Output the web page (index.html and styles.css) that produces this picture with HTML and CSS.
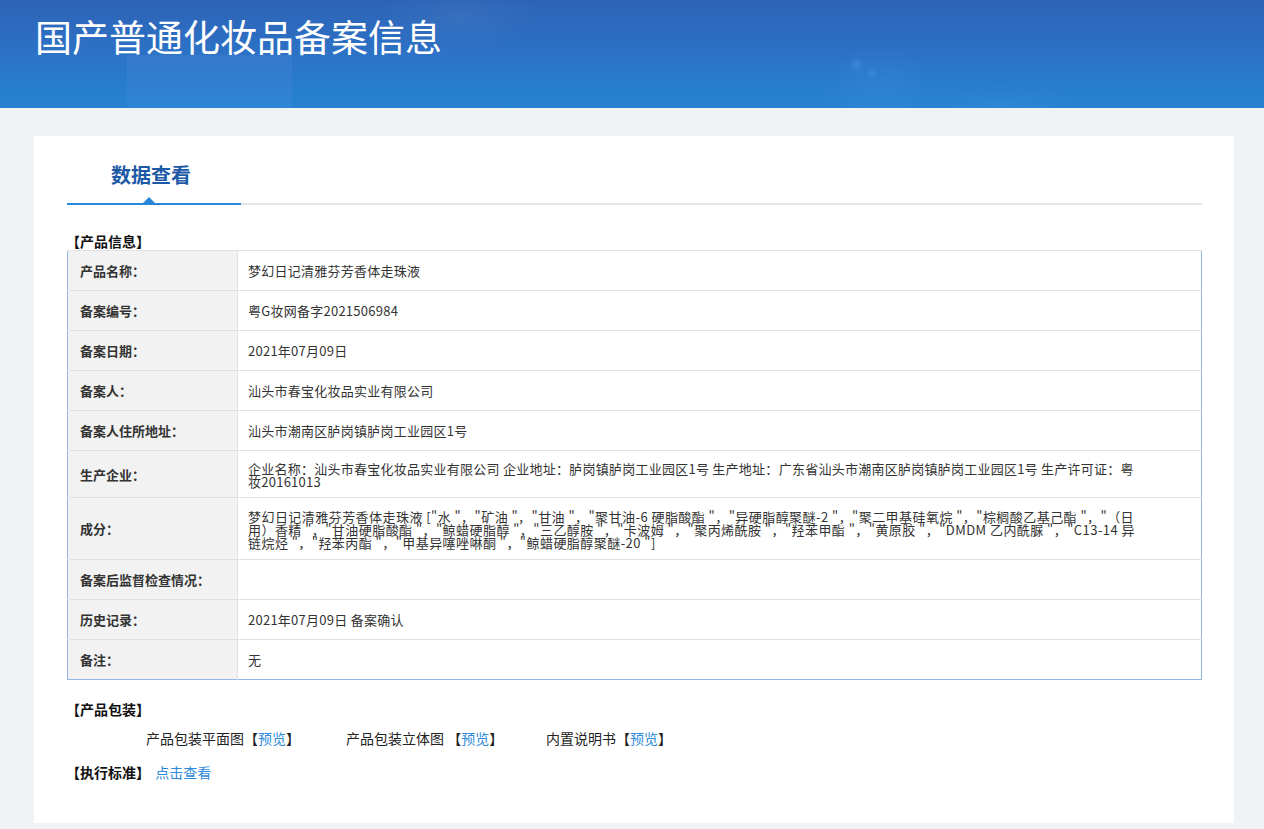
FILE: index.html
```html
<!DOCTYPE html>
<html lang="zh-CN">
<head>
<meta charset="utf-8">
<title>国产普通化妆品备案信息</title>
<link rel="stylesheet" href="styles.css">
</head>
<body>
<header class="banner">
  <h1 class="banner-title">国产普通化妆品备案信息</h1>
</header>
<main class="page">
  <section class="card">
    <div class="tabs">
      <div class="tab tab-active">数据查看</div>
    </div>

    <h2 class="section-title section-info">【产品信息】</h2>
    <table class="info">
      <tr class="row"><th>产品名称<span class="colon">：</span></th><td>梦幻日记清雅芬芳香体走珠液</td></tr>
      <tr class="row"><th>备案编号<span class="colon">：</span></th><td>粤G妆网备字2021506984</td></tr>
      <tr class="row"><th>备案日期<span class="colon">：</span></th><td>2021年07月09日</td></tr>
      <tr class="row"><th>备案人<span class="colon">：</span></th><td>汕头市春宝化妆品实业有限公司</td></tr>
      <tr class="row"><th>备案人住所地址<span class="colon">：</span></th><td>汕头市潮南区胪岗镇胪岗工业园区1号</td></tr>
      <tr class="row row-multi"><th>生产企业<span class="colon">：</span></th><td>企业名称<span class="colon">：</span>汕头市春宝化妆品实业有限公司 企业地址<span class="colon">：</span>胪岗镇胪岗工业园区1号 生产地址<span class="colon">：</span>广东省汕头市潮南区胪岗镇胪岗工业园区1号 生产许可证<span class="colon">：</span>粤妆20161013</td></tr>
      <tr class="row row-multi row-comp"><th>成分<span class="colon">：</span></th><td>梦幻日记清雅芬芳香体走珠液 ["水 "，"矿油 "，"甘油 "，"聚甘油-6 硬脂酸酯 "，"异硬脂醇聚醚-2 "，"聚二甲基硅氧烷 "，"棕榈酸乙基己酯 "，"（日用）香精 "，"甘油硬脂酸酯 "，"鲸蜡硬脂醇 "，"三乙醇胺 "，"卡波姆 "，"聚丙烯酰胺 "，"羟苯甲酯 "，"黄原胶 "，"DMDM 乙内酰脲 "，"C13-14 异链烷烃 "，"羟苯丙酯 "，"甲基异噻唑啉酮 "，"鲸蜡硬脂醇聚醚-20 "]</td></tr>
      <tr class="row"><th>备案后监督检查情况<span class="colon">：</span></th><td></td></tr>
      <tr class="row"><th>历史记录<span class="colon">：</span></th><td>2021年07月09日 备案确认</td></tr>
      <tr class="row"><th>备注<span class="colon">：</span></th><td>无</td></tr>
    </table>

    <h2 class="section-title section-pkg">【产品包装】</h2>
    <div class="pkg">
      <span class="pkg-item">产品包装平面图【<a class="link" href="#">预览</a>】</span>
      <span class="pkg-item">产品包装立体图 【<a class="link" href="#">预览</a>】</span>
      <span class="pkg-item">内置说明书【<a class="link" href="#">预览</a>】</span>
    </div>

    <div class="std">
      <span class="std-title">【执行标准】</span>
      <a class="link" href="#">点击查看</a>
    </div>
  </section>
</main>
</body>
</html>
```

FILE: styles.css
```css
* { box-sizing: border-box; }

html, body {
  margin: 0;
  padding: 0;
}

body {
  background: #eff3f6;
  font-family: "Microsoft YaHei", "Noto Sans CJK SC", "Noto Sans", sans-serif;
  color: #333;
  font-size: 13px;
}

.banner {
  height: 108px;
  background:
    radial-gradient(ellipse 90px 60px at 880px 90px, rgba(90, 160, 230, 0.15), transparent 70%),
    radial-gradient(ellipse 120px 40px at 1000px 110px, rgba(90, 170, 230, 0.12), transparent 70%),
    radial-gradient(circle 8px at 857px 64px, rgba(70, 150, 230, 0.45), transparent 100%),
    radial-gradient(circle 6px at 872px 73px, rgba(70, 150, 230, 0.45), transparent 100%),
    linear-gradient(170deg, rgba(80, 140, 220, 0.22) 0, rgba(80, 140, 220, 0.22) 100%) 127px 55px / 165px 53px no-repeat,
    radial-gradient(ellipse 100px 40px at 460px 15px, rgba(255, 255, 255, 0.05), transparent 80%),
    linear-gradient(180deg, #2d63b6 0%, #2c72c6 50%, #2683d2 100%);
  padding: 13px 0 0 35px;
}

.banner-title {
  margin: 0;
  color: #fff;
  font-weight: normal;
  font-size: 37px;
  line-height: 46px;
  letter-spacing: 0;
}

.page {
  padding: 28px 30px 6px 34px;
}

.card {
  background: #fff;
  width: 1200px;
  height: 687px;
  padding: 24px 32px 0 33px;
}

.tabs {
  border-bottom: 2px solid #e5e5e5;
  display: flex;
}

.tab {
  position: relative;
  width: 174px;
  padding: 0 6px 13px 0;
  text-align: center;
  font-size: 20px;
  font-weight: bold;
  line-height: 30px;
  color: #1c5aa6;
  margin-bottom: -2px;
  border-bottom: 2px solid #2787d8;
}

.tab-active::after {
  content: "";
  position: absolute;
  left: 76px;
  bottom: 0;
  width: 0;
  height: 0;
  border-left: 6px solid transparent;
  border-right: 6px solid transparent;
  border-bottom: 6px solid #2787d8;
}

.section-title {
  margin: 27px 0 0 -1px;
  font-size: 14px;
  font-weight: bold;
  color: #111;
  line-height: 18px;
}

.colon {
  font-family: "Noto Sans CJK JP", "Noto Sans CJK SC", sans-serif;
}

.info {
  width: 1135px;
  border-collapse: collapse;
  border: 1px solid #93b7e5;
  margin-top: 0;
}

.info th,
.info td {
  border-top: 1px solid #e1e1e1;
  vertical-align: middle;
  height: 40px;
  font-size: 13px;
}

.info th {
  width: 170px;
  background: #f2f2f2;
  text-align: left;
  font-weight: bold;
  color: #333;
  padding: 0 0 0 12px;
  border-right: 1px solid #e1e1e1;
}

.info td {
  padding: 0 58px 0 10px;
  color: #333;
  line-height: 13px;
  letter-spacing: 0.25px;
}

.row-multi td {
  height: 47px;
  padding-top: 1px;
}

.row-comp td {
  height: 62px;
  padding-top: 2px;
  letter-spacing: 0.45px;
}

.section-pkg {
  margin-top: 20px;
}

.pkg {
  display: flex;
  padding-left: 79px;
  margin-top: 11px;
  line-height: 18px;
  font-size: 14px;
  color: #222;
}

.pkg-item {
  width: 200px;
  white-space: nowrap;
}

.link {
  color: #2c8ad9;
  text-decoration: none;
}

.std {
  margin-top: 16px;
  margin-left: -1px;
  line-height: 18px;
  font-size: 14px;
}

.std-title {
  font-weight: bold;
  color: #111;
  margin-right: 2px;
}
```
